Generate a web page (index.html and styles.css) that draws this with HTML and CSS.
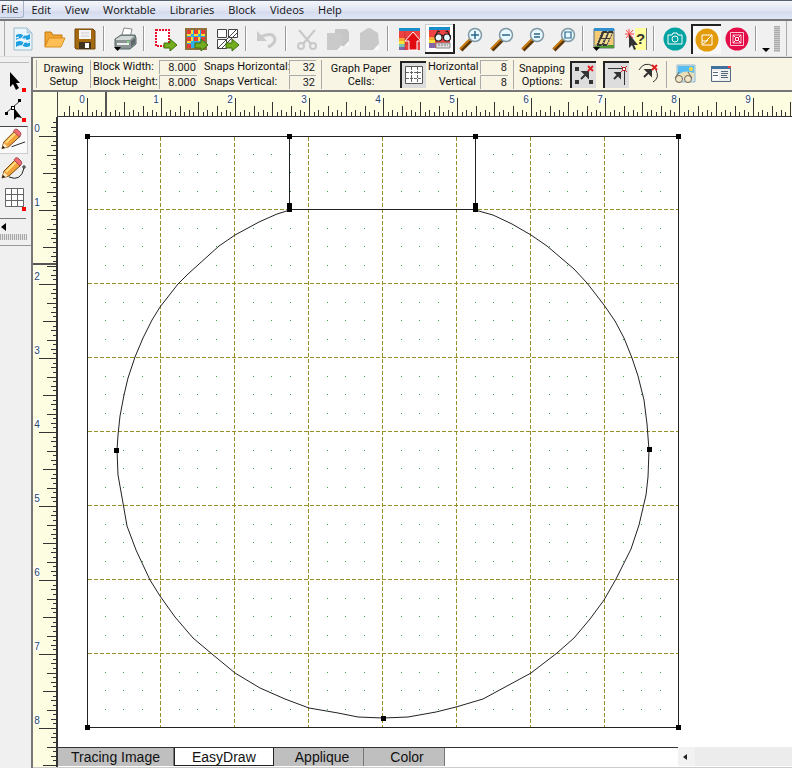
FILE: index.html
```html
<!DOCTYPE html>
<html lang="en">
<head>
<meta charset="utf-8">
<title>Block worktable</title>
<link rel="stylesheet" href="styles.css">
</head>
<body>
<div class="app">
  <nav class="menu">
    <button class="menu-item is-open">File</button>
    <button class="menu-item">Edit</button>
    <button class="menu-item">View</button>
    <button class="menu-item">Worktable</button>
    <button class="menu-item">Libraries</button>
    <button class="menu-item">Block</button>
    <button class="menu-item">Videos</button>
    <button class="menu-item">Help</button>
  </nav>

  <div class="toolbar">
    <div class="group">
      <button class="tool" aria-label="New"><svg width="24" height="26" viewBox="0 0 24 26"><path d="M3 2h13l5 5v17H3z" fill="#e9f6fd" stroke="#9bbccc"/><path d="M16 2v5h5z" fill="#c3dbe8" stroke="#9bbccc" stroke-width=".6"/><path d="M5 9q4-2 7 0t7-1v5q-4 2-7 0t-7 1zM5 16q4-2 7 0t7-1v5q-4 2-7 0t-7 1z" fill="#1e9fe0"/><path d="M13 9l-3 4h5l-4 7M5 12l3-1M16 17l3-1" fill="none" stroke="#fff"/></svg></button>
      <button class="tool" aria-label="Open"><svg width="24" height="24" viewBox="0 0 24 24"><path d="M3 20V5h6l2 3h9v5" fill="#f0a431" stroke="#c27912"/><path d="M3 20l4-9h16l-4 9z" fill="#ffbf55" stroke="#d98c20"/></svg></button>
      <button class="tool" aria-label="Save"><svg width="24" height="24" viewBox="0 0 24 24"><path d="M2 2h18l2 2v18H3l-1-1z" fill="#a56a10" stroke="#704508"/><path d="M6 3h12v9H6z" fill="#f4f4f4"/><path d="M8 6h8M8 9h8" stroke="#ccc"/><path d="M6 15h12v7H6z" fill="#3f3420"/><path d="M12 16h4v5h-4z" fill="#fff"/></svg></button>
    </div>
    <span class="sep"></span>
    <div class="group">
      <button class="tool" aria-label="Print"><svg width="26" height="26" viewBox="0 0 26 26"><path d="M9 12l3-10 8 1-2 9z" fill="#fff" stroke="#888"/><path d="M3 13l6-4h14l1 3v6l-6 5H4l-1-3z" fill="#8b9494" stroke="#566"/><path d="M4 13l5-3h13l-4 4H4z" fill="#d2d8d8"/><path d="M5 18h12" stroke="#eee" stroke-width="2"/><path d="M19 15l4-3v5l-4 4z" fill="#5f6868"/><circle cx="16" cy="16" r="1" fill="#6f6"/><path d="M2 21h7l-3.500 4z" fill="#000"/></svg></button>
    </div>
    <span class="sep"></span>
    <div class="group">
      <button class="tool" aria-label="Add selection"><svg width="26" height="26" viewBox="0 0 26 26"><path d="M4 4h13v16H4z" fill="#fff" stroke="#e8102c" stroke-width="2" stroke-dasharray="2 1"/><path d="M12 17h6v-4l7 6-7 6v-3h-6z" fill="#74ad1e" stroke="#3f6f0c"/></svg></button>
      <button class="tool" aria-label="Add quilt"><svg width="26" height="26" viewBox="0 0 26 26"><path d="M3 3h20v20H3z" fill="#31aee7" stroke="#90713d" stroke-width="2"/><path d="M4 4h4v4H4zM11 4h4v4h-4zM18 4h4v4h-4zM4 11h4v4H4zM11 11h4v4h-4zM18 11h4v4h-4zM4 18h4v4H4z" fill="#e83e34"/><path d="M8 4h2v4H8zM15 4h2v4h-2zM8 11h2v4H8zM15 11h2v4h-2zM4 8h4v2H4zM11 8h4v2h-4zM18 8h4v2h-4zM4 15h4v2H4z" fill="#ffdd35"/><path d="M12 17h6v-4l7 6-7 6v-3h-6z" fill="#74ad1e" stroke="#3f6f0c"/></svg></button>
      <button class="tool" aria-label="Add block"><svg width="26" height="26" viewBox="0 0 26 26"><path d="M3.500 3.500h9v8h-9zM14.500 3.500h9v8h-9zM3.500 13.500h9v9h-9z" fill="#fff" stroke="#444"/><path d="M23 3L3 23M24 6L7 23" stroke="#444"/><path d="M12 17h6v-4l7 6-7 6v-3h-6z" fill="#74ad1e" stroke="#3f6f0c"/></svg></button>
    </div>
    <span class="sep"></span>
    <div class="group">
      <button class="tool" aria-label="Undo"><svg width="24" height="24" viewBox="0 0 24 24"><path d="M5 10q13-6 15 2 0 5-7 8" fill="none" stroke="#cacaca" stroke-width="3"/><path d="M2 4v10h10z" fill="#cacaca"/></svg></button>
    </div>
    <span class="sep"></span>
    <div class="group">
      <button class="tool" aria-label="Cut"><svg width="24" height="24" viewBox="0 0 24 24" fill="none" stroke="#c8c8c8" stroke-width="2"><path d="M4 3l12 14M20 3L8 17"/><circle cx="6" cy="19" r="3"/><circle cx="18" cy="19" r="3"/></svg></button>
      <button class="tool" aria-label="Copy"><svg width="26" height="26" viewBox="0 0 26 26"><path d="M10 3h12l2 3v14H10z" fill="#c6c6c6"/><path d="M2 7h13l2 3v14H2z" fill="#cacaca"/><path d="M12 24l5-5v5zM19 20l5-5v5z" fill="#f8f8f8"/></svg></button>
      <button class="tool" aria-label="Paste"><svg width="26" height="26" viewBox="0 0 26 26"><path d="M4 7l5-3q4-4 8 0l5 3 1 11-5 6H4z" fill="#c9c9c9"/><path d="M17 24l6-6v6z" fill="#fafafa"/></svg></button>
    </div>
    <span class="sep"></span>
    <div class="group">
      <button class="tool" aria-label="Add to sketchbook"><svg width="26" height="26" viewBox="0 0 26 26"><path d="M3 3h21v21H3z" fill="#ed4040"/><path d="M3 2h21v3H3z" fill="#1a8ecb"/><path d="M3 12h6v3H3z" fill="#f7a636"/><path d="M3 15h6v3H3z" fill="#f7e23b"/><path d="M3 18h6v3H3z" fill="#7fc8b0"/><path d="M3 21h6v3H3z" fill="#8066ab"/><path d="M9 5v19M9 12h15M9 18h15M16 5v19" stroke="#b42b2b" stroke-width=".6"/><path d="M17 6l8 9h-4v9h-8v-9H9z" fill="#e30b12" stroke="#fff"/></svg></button>
      <button class="tool is-raised" aria-label="View sketchbook"><svg width="26" height="26" viewBox="0 0 26 26"><path d="M3 3h21v20H3z" fill="#ee4141"/><path d="M3 2h21v3H3z" fill="#1a8ecb"/><path d="M3 12h6v3H3z" fill="#f7a636"/><path d="M3 15h6v3H3z" fill="#f7e23b"/><path d="M3 18h6v5H3z" fill="#8066ab"/><path d="M10 18h14v5H10z" fill="#ddd" stroke="#888"/><path d="M12 20h10" stroke="#777" stroke-dasharray="2 1"/><g fill="#e7f7ff" stroke="#222" stroke-width="1.200"><circle cx="12.500" cy="12.500" r="3.500"/><circle cx="21" cy="12.500" r="3.500"/><path d="M15.500 11q1-1 2 0M9 12l3-6 2 1M24.500 12l-3-6-2 1" fill="none"/></g></svg></button>
      <button class="tool" aria-label="Zoom in"><svg width="26" height="26" viewBox="0 0 26 26"><path d="M3 24L13 14" stroke="#5d3707" stroke-width="4"/><path d="M2 23L12 13" stroke="#c97c10" stroke-width="2"/><circle cx="17" cy="9" r="6.500" fill="#e7f8ff" stroke="#8199a5" stroke-width="1.500"/><path d="M13 9h8M17 5v8" stroke="#2a668b" stroke-width="1.500"/></svg></button>
      <button class="tool" aria-label="Zoom out"><svg width="26" height="26" viewBox="0 0 26 26"><path d="M3 24L13 14" stroke="#5d3707" stroke-width="4"/><path d="M2 23L12 13" stroke="#c97c10" stroke-width="2"/><circle cx="17" cy="9" r="6.500" fill="#e7f8ff" stroke="#8199a5" stroke-width="1.500"/><path d="M13 9h8" stroke="#2a668b" stroke-width="1.500"/></svg></button>
      <button class="tool" aria-label="Refresh zoom"><svg width="26" height="26" viewBox="0 0 26 26"><path d="M3 24L13 14" stroke="#5d3707" stroke-width="4"/><path d="M2 23L12 13" stroke="#c97c10" stroke-width="2"/><circle cx="17" cy="9" r="6.500" fill="#e7f8ff" stroke="#8199a5" stroke-width="1.500"/><path d="M14 8h6M14 11h6" stroke="#2a668b" stroke-width="1.500"/></svg></button>
      <button class="tool" aria-label="Fit to window"><svg width="26" height="26" viewBox="0 0 26 26"><path d="M3 24L13 14" stroke="#5d3707" stroke-width="4"/><path d="M2 23L12 13" stroke="#c97c10" stroke-width="2"/><circle cx="17" cy="9" r="6.500" fill="#e7f8ff" stroke="#8199a5" stroke-width="1.500"/><path d="M14 6h6v6h-6z" fill="none" stroke="#2a668b" stroke-width="1.200"/></svg></button>
    </div>
    <span class="sep"></span>
    <div class="group">
      <button class="tool" aria-label="Watch a video"><svg width="26" height="26" viewBox="0 0 26 26"><path d="M3 3h20v19H3z" fill="#f4cb73" stroke="#5f6e76"/><path d="M3 2h20v3H3z" fill="#3290d0"/><path d="M4 19h19v3H4z" fill="#4f9836"/><path d="M11 5h12l-7 15H5z" fill="#38382f"/><path d="M13 7h3l-2 5h-3zM18 7h3l-2 5h-3zM10 13h3l-2 5H8zM15 13h3l-2 5h-3z" fill="#f4dd93"/><path d="M11 5L5 20M17 5l-6 15M23 5l-7 15" stroke="#eee" stroke-dasharray="1 2"/><path d="M2 21h7l-3.500 4z" fill="#000"/></svg></button>
      <button class="tool" aria-label="What's this help"><svg width="26" height="26" viewBox="0 0 26 26"><path d="M13 2h11v22H13z" fill="#ffff9d"/><path d="M24.500 2v22" stroke="#777"/><path d="M3 8h9M7 3v9M4 4l7 8M11 4l-7 8" stroke="#ff4343"/><path d="M7 8v14l3-3 2 5 2-1-2-4h4z" fill="#333"/><text x="14" y="18" class="question">?</text></svg></button>
    </div>
    <span class="sep"></span>
    <div class="group">
      <button class="tool" aria-label="Photo worktable"><svg width="26" height="26" viewBox="0 0 26 26"><circle cx="13" cy="13" r="11.500" fill="#00a3a1"/><path d="M6 9h4l1-2h4l1 2h4v9H6z" fill="none" stroke="#fff"/><circle cx="13" cy="13" r="3" fill="none" stroke="#fff"/></svg></button>
      <button class="tool is-pressed" aria-label="Block worktable"><svg width="26" height="26" viewBox="0 0 26 26"><circle cx="13" cy="13" r="11.500" fill="#e39b0b"/><path d="M8 8h10v10H8zM8 14h5v-1l5-5M9 17l5-4" fill="none" stroke="#fff"/></svg></button>
      <button class="tool" aria-label="Quilt worktable"><svg width="26" height="26" viewBox="0 0 26 26"><circle cx="13" cy="13" r="11.500" fill="#e50d47"/><path d="M6.500 6.500h13v13h-13zM9 9h8v8H9z" fill="none" stroke="#ffc4d4"/><path d="M11.500 11.500h3v3h-3zM9 9l2 2M17 9l-2 2M9 17l2-2M17 17l-2-2" fill="none" stroke="#fff"/></svg></button>
    </div>
    <span class="sep"></span>
    <button class="more" aria-label="More buttons"><svg width="8" height="5"><path d="M0 0h8L4 4z"/></svg></button>
    <span class="grip"></span>
    <span class="toolbar-end"></span>
  </div>

  <div class="main">
    <aside class="palette">
      <span class="palette-top"></span>
      <button class="draw" aria-label="Pick"><svg width="28" height="30" viewBox="0 0 28 30"><path d="M10 6v15l3-3 3 6 3-2-3-5h4z" fill="#000"/><path d="M22 22h4v4h-4z" fill="red"/></svg></button>
      <button class="draw" aria-label="Edit node"><svg width="28" height="30" viewBox="0 0 28 30"><path d="M6 17L20 5" stroke="#333"/><path d="M5 16h3v3H5zM18 3h3v3h-3zM11 10h4v4h-4z"/><path d="M12 11h2v2h-2z" fill="#fff"/><path d="M14 12v12l3-3 5 1z"/><path d="M22 22h4v4h-4z" fill="red"/></svg></button>
      <button class="draw is-current" aria-label="Line"><svg width="28" height="26" viewBox="0 0 28 26"><path d="M12 20l14-5" stroke="#222"/><path d="M2 22l2-7L15 4l6 5L9 20z" fill="#f3a13b" stroke="#754a16"/><path d="M6 16L16 6" stroke="#ffe082" stroke-width="2"/><path d="M14 4q2-4 5-1l2 2q2 2-1 5z" fill="#ef6b70" stroke="#a74850"/><path d="M2 22l2-6 4 4z" fill="#ffe7bd"/><path d="M2 22l1-3 2 2z"/></svg></button>
      <button class="draw" aria-label="Arc"><svg width="28" height="28" viewBox="0 0 28 28"><path d="M9 23q12 5 15-9" stroke="#222" fill="none"/><path d="M23 12h2v2h-2z" fill="#fff" stroke="#222"/><path d="M2 24l2-7L15 6l6 5L9 22z" fill="#f3a13b" stroke="#754a16"/><path d="M6 18L16 8" stroke="#ffe082" stroke-width="2"/><path d="M14 6q2-4 5-1l2 2q2 2-1 5z" fill="#ef6b70" stroke="#a74850"/><path d="M2 24l2-6 4 4z" fill="#ffe7bd"/><path d="M2 24l1-3 2 2z"/></svg></button>
      <button class="draw" aria-label="Grid"><svg width="28" height="28" viewBox="0 0 28 28"><path d="M5.500 4.500h18v18h-18zM11.500 4v18M17.500 4v18M5 10.500h18M5 16.500h18" fill="#fff" stroke="#666"/><path d="M22 23h4v4h-4z" fill="red"/></svg></button>
      <span class="palette-rule"></span>
      <button class="palette-more" aria-label="More tools"><svg width="5" height="8"><path d="M5 0v8L0 4z"/></svg></button>
      <span class="palette-grip"></span>
    </aside>

    <section class="workspace">
      <form class="options">
        <div class="caption setup">Drawing<br>Setup</div>
        <div class="fields size">
          <label for="bw">Block Width:</label><input id="bw" value="8.000">
          <label for="bh">Block Height:</label><input id="bh" value="8.000">
        </div>
        <div class="fields snaps">
          <label for="sh">Snaps Horizontal:</label><input id="sh" value="32">
          <label for="sv">Snaps Vertical:</label><input id="sv" value="32">
        </div>
        <div class="caption graph">Graph Paper<br>Cells:</div>
        <button type="button" class="option is-down" aria-label="Show graph paper"><svg width="22" height="22" viewBox="0 0 22 22"><path d="M2.500 2.500h17v17h-17z" fill="#fff" stroke="#555"/><path d="M8.500 3v17M14.500 3v17M3 8.500h17M3 14.500h17" stroke="#666" stroke-dasharray="3 1"/></svg></button>
        <div class="fields cells">
          <label for="ch">Horizontal</label><input id="ch" value="8">
          <label for="cv">Vertical</label><input id="cv" value="8">
        </div>
        <div class="caption snapping">Snapping<br>Options:</div>
        <div class="snap-buttons">
          <button type="button" class="option is-down" aria-label="Snap to grid"><svg width="22" height="22" viewBox="0 0 22 22"><path d="M2 3h4v4H2zM2 16h4v4H2zM16 16h4v4h-4z" fill="#333"/><path d="M8 15l6-6M10 8h5v5z" stroke="#333" stroke-width="2" fill="#333"/><path d="M15 2l5 5M20 2l-5 5" stroke="#d22" stroke-width="2"/></svg></button>
          <button type="button" class="option is-down" aria-label="Snap to nodes"><svg width="22" height="22" viewBox="0 0 22 22"><path d="M2 4.500h14M18.500 7v14" stroke="#333"/><path d="M8 15l5-5M10 9h4v4z" stroke="#333" stroke-width="2" fill="#333"/><path d="M15 2l6 6M21 2l-6 6" stroke="#d22"/><path d="M16.500 3.500h3v3h-3z" fill="#fff" stroke="#a22"/></svg></button>
          <button type="button" class="option" aria-label="Snap to drawing"><svg width="22" height="22" viewBox="0 0 22 22"><path d="M1 7Q6-2 15 3M18 7q4 8-3 12" stroke="#333" fill="none"/><path d="M6 14l6-6M8 7h5v5z" stroke="#333" stroke-width="2" fill="#333"/><path d="M14 2l5 5M19 2l-5 5" stroke="#d22" stroke-width="2"/></svg></button>
        </div>
        <div class="image-buttons">
          <button type="button" class="option" aria-label="Tracing image"><svg width="22" height="22" viewBox="0 0 22 22"><path d="M3 2h18v17H3z" fill="#d6e5e8" stroke="#92b9c9"/><path d="M4 3h16v9H4z" fill="#57bdf2"/><path d="M4 12q6-6 16-2v4H4z" fill="#e8dfb5"/><circle cx="17" cy="6" r="2" fill="#ffd835"/><circle cx="5" cy="16" r="3.500" fill="#efe8c8" stroke="#765"/><circle cx="14" cy="16" r="3.500" fill="#efe8c8" stroke="#765"/><path d="M1 15l4-6M18 15l-4-6" stroke="#765" fill="none"/></svg></button>
          <button type="button" class="option" aria-label="Properties"><svg width="22" height="22" viewBox="0 0 22 22"><path d="M1.500 3.500h19v15h-19z" fill="#eee" stroke="#556c82"/><path d="M1 3h20v3H1z" fill="#41729b"/><path d="M18 3h3v2h-3z" fill="#e44"/><path d="M3 8h6v9H3z" fill="#fff"/><path d="M3 9.500h5M3 12.500h5M11 8.500h7M11 10.500h7M11 12.500h6M11 14.500h7" stroke="#567"/></svg></button>
        </div>
      </form>

      <div class="board">
        <div class="corner"></div>
        <svg class="ruler ruler-top" id="ruler-top" aria-hidden="true"></svg>
        <svg class="ruler ruler-left" id="ruler-left" aria-hidden="true"></svg>
        <div class="page">
          <svg class="drawing" role="img" aria-label="Ornament block">
            <g transform="translate(-58 -117)" fill="none">
              <g id="grid"></g>
              <path class="outline" d="M87.500 136.500H678.500V727.500H87.500zM289.500 136V209.500H475.500V136"/>
              <path class="outline curve" d="M290 210L277 214 259 222 235 235 219 246 188 274 178 284 160 307 152 320 143 338 135 357 128 378 124 395 120 416 118 435 117 450 118 475 123 503 127 526 136 550 150 580 160 596 175 617 193 638 212 654 235 673 260 688 285 699 309 708 338 713 358 717 383 718 408 717 436 712 456 707 483 699 531 673 557 653 574 638 590 619 604 600 616 579 631 549 639 525 646 495 648 477 649 450 647 424 644 400 638 376 632 358 624 338 615 321 604 305 587 283 574 269 547 246 531 235 512 224 493 215 475 210"/>
              <path class="node" d="M85 134h5v5h-5zM287 134h5v5h-5zM473 134h5v5h-5zM676 134h5v5h-5zM287 203h5v9h-5zM473 203h5v9h-5zM114 448h5v5h-5zM647 447h5v5h-5zM381 716h5v5h-5zM85 725h5v5h-5zM676 725h5v5h-5z"/>
            </g>
          </svg>
        </div>
        <div class="footer">
          <div class="tabs">
            <button class="tab">Tracing Image</button>
            <button class="tab is-active">EasyDraw</button>
            <button class="tab">Applique</button>
            <button class="tab">Color</button>
          </div>
          <div class="scroll"><button class="scroll-left" aria-label="Scroll left"><svg width="4" height="6"><path d="M4 0v6L0 3z" fill="#222"/></svg></button></div>
        </div>
      </div>
    </section>
  </div>
</div>
<script src="script.js"></script>
</body>
</html>
```
FILE: styles.css
```css
* { box-sizing: border-box; }
body { margin: 0; background: #f0f0f0; font-family: "Liberation Sans", Arial, sans-serif; color: #111; }
button { margin: 0; padding: 0; border: 0; background: none; font: inherit; color: inherit; }
svg { display: block; }
.app { display: flex; flex-direction: column; height: 100vh; overflow: hidden; }

.menu { display: flex; flex: none; height: 19px; border-top: 1px solid #596273; background: linear-gradient(#f4f6fb, #dfe4f2 55%, #d5dbee 60%, #dfe6f6); font: 11px "Open Sans", "Noto Sans", sans-serif; }
.menu-item { height: 17px; padding: 0 7px; line-height: 16px; }
.menu-item.is-open { padding: 0 5px 0 1px; border: solid #aab1c2; border-width: 0 1px 1px 0; border-radius: 0 0 3px 0; }

.toolbar { display: flex; flex: none; align-items: center; height: 38px; padding-left: 8px; border-top: 2px solid #777; border-bottom: 1px solid #ddd; background: #f0f0f0; overflow: hidden; box-shadow: inset 4px 0 #f0f0f0, inset 5px 0 #aaa; }
.group { display: flex; gap: 1px; }
.tool { display: flex; align-items: center; justify-content: center; width: 30px; height: 30px; }
.tool.is-raised { border: solid #222; border-width: 0 2px 2px 0; background: #fff; box-shadow: inset 1px 1px #ccc; }
.tool.is-pressed { border: solid #222; border-width: 2px 0 0 2px; background: #f8f8f8; }
.sep { width: 10px; height: 25px; background: linear-gradient(90deg, transparent 3px, #999 3px, #999 4px, #fff 4px, #fff 5px, transparent 5px); }
.question { font: bold 15px "Liberation Sans", sans-serif; fill: #333; }
.more { align-self: flex-end; padding-bottom: 3px; }
.grip { width: 6px; height: 26px; margin-left: 4px; background: repeating-linear-gradient(#aaa 0 1px, #ccc 1px 2px); }
.toolbar-end { width: 1px; height: 35px; margin-left: 6px; background: #aaa; }

.main { display: flex; flex: 1; min-height: 0; }
.palette { display: flex; flex: none; flex-direction: column; align-items: flex-start; width: 31px; background: #f0f0f0; }
.palette-top { width: 29px; height: 6px; margin-bottom: 3px; border-bottom: 1px solid #bbb; }
.draw { display: flex; flex: none; width: 28px; height: 30px; }
.draw.is-current { height: 28px; border: solid #ccc; border-width: 1px 1px 1px 0; border-top-color: #444; background: #fafafa; }
.palette-rule { width: 26px; height: 5px; border-bottom: 1px solid #777; }
.palette-more { margin: 4px 0 1px 1px; }
.palette-grip { width: 31px; height: 14px; border-bottom: 1px solid #999; background: repeating-linear-gradient(90deg, #aaa 0 1px, #e4e4e4 1px 2px) 0 2px / 27px 6px no-repeat; }

.workspace { display: flex; flex: 1; flex-direction: column; min-width: 0; border-left: 2px solid #777; }
.options { display: flex; flex: none; align-items: center; height: 35px; padding-left: 3px; border-top: 1px solid #777; border-bottom: 2px solid #777; background: #f9f5e5; font: 11px/13px Roboto, "Liberation Sans", sans-serif; white-space: nowrap; }
.caption { height: 28px; padding-top: 2px; text-align: center; }
.setup { width: 55px; border: solid #aaa; border-width: 0 1px; }
.fields { display: grid; grid-auto-rows: 14px; column-gap: 4px; row-gap: 1px; }
.fields input { width: 100%; min-width: 0; height: 14px; margin: 0; padding: 0 1px 0 0; border: solid #aaa; border-width: 1px 0 0 1px; background: #f9f5e5; color: #222; font: inherit; text-align: right; }
.size { grid-template-columns: 62px 38px; padding-left: 2px; }
.snaps { grid-template-columns: 81px 27px; margin-left: 7px; padding-right: 5px; border-right: 1px solid #aaa; }
.graph { width: 78px; }
.cells { grid-template-columns: 48px 28px; padding: 0 5px 0 2px; border-right: 1px solid #aaa; text-align: right; }
.snapping { width: 56px; }
.option { display: flex; flex: none; align-items: center; justify-content: center; width: 26px; height: 27px; }
.option.is-down { border: solid #222; border-width: 2px 0 0 2px; background: #ddd; }
.snap-buttons { display: flex; gap: 7px; padding-right: 4px; border-right: 1px solid #aaa; }
.image-buttons { display: flex; gap: 10px; padding-left: 5px; }

.board { display: grid; flex: 1; grid-template: 25px 1fr 20px / 25px 1fr; min-height: 0; border-bottom: 1px solid #ccc; background: #fff; }
.corner, .ruler { background: #fdfde2; }
.corner { border-right: 1px solid #444; }
.ruler { width: 100%; height: 100%; min-height: 0; overflow: hidden; }
.ruler-top { border-bottom: 1px solid #333; }
.ruler-left { grid-row: 2 / 4; border-right: 2px solid #333; }
.tick { stroke: #333; }
.marker { stroke: #555; stroke-width: 2; }
.number-box { fill: #fff; }
.number { font: 10px "Liberation Sans", sans-serif; fill: #284868; text-anchor: middle; }
.page { min-width: 0; min-height: 0; overflow: hidden; }
.drawing { width: 100%; height: 100%; }
.outline { stroke: #222; }
.cell-line { stroke: #96902a; stroke-dasharray: 4 2; }
.dot { fill: #3fa045; }
.node { fill: #000; }

.footer { display: flex; min-width: 0; }
.tabs { display: flex; width: 620px; height: 19px; border-top: 1px solid #333; font-size: 14px; line-height: 18px; }
.tab { height: 18px; padding: 0 17px; background: #bfbfbf; border-right: 1px solid #777; }
.tab:first-child { padding: 0 13px; }
.tab:nth-child(3) { padding: 0 14px 0 21px; }
.tab:nth-child(4) { padding: 0 20px 0 26px; }
.tab.is-active { background: #fff; border: solid #222; border-width: 0 1px 1px; }
.scroll { flex: 1; height: 19px; background: #ececec; }
.scroll-left { width: 17px; height: 19px; padding-left: 5px; background: #f2f2f2; }
```
FILE: script.js
```js
const NS = "http://www.w3.org/2000/svg";
const UNIT = 74;

function add(parent, tag, attrs, text) {
  const el = document.createElementNS(NS, tag);
  for (const key in attrs) el.setAttribute(key, attrs[key]);
  if (text !== undefined) el.textContent = text;
  parent.appendChild(el);
}

function tickLength(i) {
  if (i % 16 === 0) return 18;
  if (i % 8 === 0) return 14;
  if (i % 4 === 0) return 10;
  return i % 2 === 0 ? 6 : 4;
}

// Both rulers share one scale: sixteen ticks to the inch, with the number before its tick.
function drawRuler(svg, origin, vertical, first) {
  const box = svg.getBoundingClientRect();
  const length = vertical ? box.height : box.width;
  svg.replaceChildren();
  for (let i = first; origin + i * UNIT / 16 < length; i++) {
    const p = Math.round(origin + i * UNIT / 16) + 0.5;
    const from = 24 - tickLength(i);
    add(svg, "line", vertical
      ? { class: "tick", x1: from, x2: 24, y1: p, y2: p }
      : { class: "tick", y1: from, y2: 24, x1: p, x2: p });
  }
  for (let n = 0; origin + n * UNIT < length; n++) {
    const p = origin + n * UNIT;
    const x = vertical ? 4 : p - 5;
    const y = vertical ? p - 8 : 7;
    add(svg, "rect", { class: "number-box", x: x - 3, y: y - 5, width: 6, height: 10 });
    add(svg, "text", { class: "number", x, y: y + 4 }, n);
  }
}

function drawRulers() {
  const top = document.getElementById("ruler-top");
  const left = document.getElementById("ruler-left");
  drawRuler(top, 29, false, -5);
  drawRuler(left, 19, true, -3);
  add(top, "line", { class: "marker", x1: 48, x2: 48, y1: 0, y2: 24 });
  add(left, "line", { class: "marker", x1: 0, x2: 24, y1: 147, y2: 147 });
}

drawRulers();
window.addEventListener("resize", drawRulers);

const grid = document.getElementById("grid");
for (let n = 1; n < 8; n++) {
  const x = 86.5 + n * UNIT;
  const y = 135.5 + n * UNIT;
  add(grid, "line", { class: "cell-line", x1: x, x2: x, y1: 137, y2: 727 });
  add(grid, "line", { class: "cell-line", x1: 88, x2: 678, y1: y, y2: y });
}
for (let i = 1; i < 32; i++) {
  for (let j = 1; j < 32; j++) {
    if (i % 4 && j % 4) {
      add(grid, "rect", { class: "dot", x: Math.round(86 + i * UNIT / 4), y: Math.round(135 + j * UNIT / 4), width: 1, height: 1 });
    }
  }
}
```
